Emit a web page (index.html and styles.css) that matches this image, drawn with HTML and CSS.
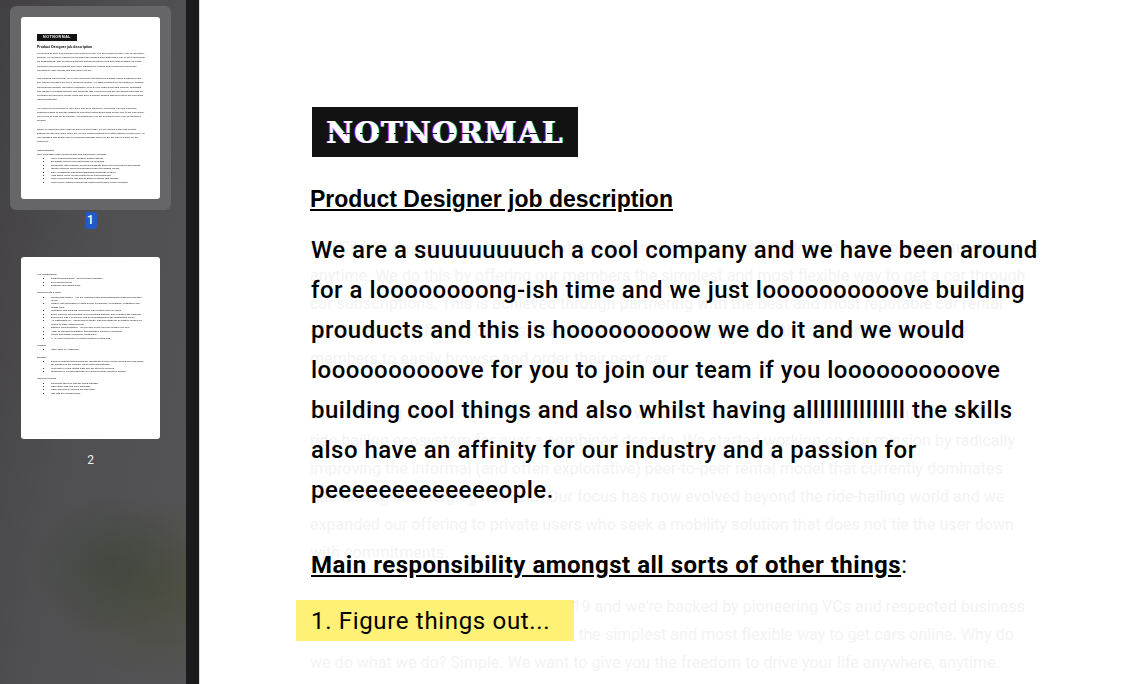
FILE: index.html
```html
<!DOCTYPE html>
<html lang="en">
<head>
  <meta charset="UTF-8">
  <meta name="viewport" content="width=device-width, initial-scale=1.0">
  <title>Product Designer job description</title>
  <link rel="stylesheet" href="styles.css">
</head>
<body>
  <div class="viewer">
    <!-- Page thumbnails -->
    <aside class="sidebar">
      <div class="thumb-wrap selected">
        <div class="thumb">
          <div class="mini-logo">NOTNORMAL</div>
          <div class="mini-title">Product Designer job description</div>
          <p>FlexClub is an auto-tech company who is driven to give you the freedom to drive your life anywhere, anytime. We do this by offering our members the simplest and most flexible way to get a car through car subscriptions. This is achieved through partnering with the best and most reputable car rental companies and fleet providers. Our online marketplace enables both commercial and private members to easily browse and order their next car.</p>
          <p>Our founding team is made up of Uber alums who specialized in building vehicle solutions for the ride-hailing ecosystem for over a combined decade. We started working on our mission by radically improving the informal (and often exploitative) peer-to-peer rental model that currently dominates ride-hailing in emerging markets. Our focus has now evolved beyond the ride-hailing world and we expanded our offering to private users who seek a mobility solution that does not tie the user down with commitments.</p>
          <p>We closed our seed round in early 2019 and we're backed by pioneering VCs and respected business leaders to fund the mission to unlock the simplest and most flexible way to get cars online. Why do we do what we do? Simple. We want to give you the freedom to drive your life anywhere, anytime.</p>
          <p>Ready to rewrite the future with us? Join FlexClub today! We are looking for the first Product Designer to join us in Cape Town. Do you like finding solutions to a better customer experience? Are you obsessed with design and love building products? Then you are the kind of person we are looking for.</p>
          <div class="mini-label">Responsibilities</div>
          <div class="mini-label">Take ownership of the product design and functionality including:</div>
          <ul>
            <li>Solve problems through desktop design patterns</li>
            <li>Be holistic problem solving through real problems</li>
            <li>Collaborate with customer needs and translate these into new features and actions</li>
            <li>Identify areas for improvement that will have the highest impact</li>
            <li>Drive consistently high design standards across the product</li>
            <li>High fidelity mock-up and prototypes to test functionality</li>
            <li>Make involvement in research to gather feedback and insights</li>
            <li>Work closely with the product and engineering team to deliver solutions</li>
          </ul>
        </div>
      </div>
      <span class="page-num current">1</span>

      <div class="thumb-wrap">
        <div class="thumb second">
          <div class="mini-label">Key Relationships</div>
          <ul>
            <li>Product Management - Senior product manager</li>
            <li>Development Team</li>
            <li>Customer Operations team</li>
          </ul>
          <div class="mini-label">Requirements &amp; Skills</div>
          <ul>
            <li>Curious and intuitive - you are obsessed with understanding the customers and their needs</li>
            <li>Mastery and application of visual syntax (typography, iconography, illustration, and design lines)</li>
            <li>Obsessed with products, technology and creating value for users</li>
            <li>Track record of implementing UX/UI solutions that help drive results in the business</li>
            <li>Experience with e-commerce and an understanding of the subscription model</li>
            <li>An outstanding UX - knows how to ideate, test and design for an intuitive product for people to make improvements</li>
            <li>Effective communicators - you are able to get everyone behind your idea</li>
            <li>Ability to interpret quantitative and qualitative sources of feedback</li>
            <li>Mobile app design experience (must have)</li>
            <li>3 - 5 years experience in product design in related field</li>
          </ul>
          <div class="mini-label">Location</div>
          <ul>
            <li>Cape Town or Amsterdam</li>
          </ul>
          <div class="mini-label">Bonuses</div>
          <ul>
            <li>Being an instrument that offers the opportunity to get in on the ground floor and shape the direction of the company as we grow internationally</li>
            <li>Work with a young vibrant team who are driven to succeed</li>
            <li>Ownership in FlexClub through our employee share incentive scheme</li>
          </ul>
          <div class="mini-label">Interview process</div>
          <ul>
            <li>Screening interview with the hiring manager</li>
            <li>Case study task and Folio showcase</li>
            <li>Panel interview to present the case study</li>
            <li>Salt with the founding team</li>
          </ul>
        </div>
      </div>
      <span class="page-num">2</span>
    </aside>

    <div class="divider"></div>

    <!-- Document page -->
    <main class="page">
      <div class="logo"><span class="logo-text">NOTNORMAL</span></div>
      <h1>Product Designer job description</h1>

      <div class="ghost">
        <p>FlexClub is an auto-tech company who is driven to give you the freedom to drive your life anywhere, anytime. We do this by offering our members the simplest and most flexible way to get a car through car subscriptions. This is achieved through partnering with the best and most reputable car rental companies and fleet providers. Our online marketplace enables both commercial and private members to easily browse and order their next car.</p>
        <p>Our founding team is made up of Uber alums who specialized in building vehicle solutions for the ride-hailing ecosystem for over a combined decade. We started working on our mission by radically improving the informal (and often exploitative) peer-to-peer rental model that currently dominates ride-hailing in emerging markets. Our focus has now evolved beyond the ride-hailing world and we expanded our offering to private users who seek a mobility solution that does not tie the user down with commitments.</p>
        <p>We closed our seed round in early 2019 and we're backed by pioneering VCs and respected business leaders to fund the mission to unlock the simplest and most flexible way to get cars online. Why do we do what we do? Simple. We want to give you the freedom to drive your life anywhere, anytime.</p>
      </div>

      <!-- Text pasted over the original copy -->
      <div class="edit">
        <p>We are a suuuuuuuuch a cool company and we have been around for a loooooooong-ish time and we just loooooooooove building prouducts and this is hooooooooow we do it and we would loooooooooove for you to join our team if you loooooooooove building cool things and also whilst having alllllllllllllll the skills also have an affinity for our industry and a passion for peeeeeeeeeeeeeople.</p>
        <p class="edit-head"><u>Main responsibility amongst all sorts of other things</u>:</p>
      </div>
      <div class="highlight">1. Figure things out...</div>
    </main>
  </div>
</body>
</html>
```

FILE: styles.css
```css
* {
  box-sizing: border-box;
}
html, body {
  margin: 0;
  height: 100%;
  overflow: hidden;
}
body {
  font-family: 'Roboto', sans-serif;
  background: #fff;
}
.viewer {
  display: flex;
  height: 684px;
}

/* Sidebar */
.sidebar {
  width: 186px;
  flex: none;
  padding-top: 6px;
  display: flex;
  flex-direction: column;
  align-items: center;
  background:
    radial-gradient(ellipse 80px 70px at 112px 566px, rgba(58,68,58,0.6), rgba(58,68,58,0) 100%),
    radial-gradient(ellipse 110px 90px at 165px 590px, rgba(72,76,50,0.6), rgba(72,76,50,0) 100%),
    linear-gradient(100deg, #413f42 0%, #4f4e50 45%, #545355 100%);
}
.thumb-wrap {
  width: 161px;
  height: 204px;
  padding: 11px;
  border-radius: 6px;
  margin-left: -5px;
}
.thumb-wrap.selected {
  background: #666567;
}
.thumb {
  width: 139px;
  height: 182px;
  padding: 17px 14px 0 16px;
  background: #fff;
  border-radius: 3px;
  color: #000;
  font-family: 'Liberation Sans', sans-serif;
  font-size: 2.45px;
  line-height: 4.2px;
  overflow: hidden;
  filter: blur(0.15px);
}
.thumb.second {
  padding-top: 16px;
}
.thumb p {
  margin: 0 0 4.2px;
}
.thumb ul {
  margin: 0 0 4px;
  padding-left: 14px;
  line-height: 3.4px;
}
.mini-logo {
  width: 40px;
  height: 7px;
  margin-bottom: 3px;
  background: #111;
  color: #fff;
  font-size: 3.6px;
  font-weight: bold;
  line-height: 7px;
  text-align: center;
  letter-spacing: 0.5px;
}
.mini-title {
  font-size: 3.5px;
  font-weight: bold;
  line-height: 7px;
  margin-bottom: 1px;
}
.page-num {
  height: 17px;
  min-width: 12px;
  margin: 2px 0 17px -5px;
  color: #eee;
  font-size: 12px;
  line-height: 17px;
  text-align: center;
}
.page-num.current {
  background: #2259c9;
  color: #fff;
  border-radius: 3px;
  font-weight: 500;
}

/* Strip between sidebar and page */
.divider {
  width: 14px;
  flex: none;
  background: #1c1a1d;
  border-right: 1px solid #dcdcdc;
}

/* Document page */
.page {
  flex: 1;
  position: relative;
  padding: 107px 0 0 110px;
  background: #fff;
}
.logo {
  width: 266px;
  height: 50px;
  margin-left: 2px;
  background: #121212;
  color: #fff;
  text-align: center;
  font-family: 'DejaVu Serif', serif;
  font-size: 29px;
  font-weight: bold;
  line-height: 52px;
  letter-spacing: 1.5px;
  text-shadow: -1px 0 0 #ff3df2, 1px 0 0 #27e8e0;
}
.logo-text {
  position: relative;
  display: inline-block;
}
/* glitch slice through the letters */
.logo-text::after {
  content: "";
  position: absolute;
  left: 0;
  right: 0;
  top: 50%;
  height: 1px;
  background: repeating-linear-gradient(90deg, #121212 0 9px, transparent 9px 17px);
}
h1 {
  margin: 28px 0 0;
  color: #000;
  font-family: 'Liberation Sans', sans-serif;
  font-size: 23px;
  font-weight: bold;
  line-height: 28px;
  text-decoration: underline;
}
.ghost {
  width: 720px;
  margin-top: 21px;
  color: #f3f3f4;
  font-size: 16.1px;
  line-height: 27.8px;
}
.ghost p {
  margin: 0 0 26.6px;
}
.edit {
  position: absolute;
  left: 111px;
  top: 230px;
  width: 735px;
  color: #000;
  font-size: 24px;
  font-weight: 500;
  line-height: 40px;
  letter-spacing: 0.5px;
}
.edit p {
  margin: 0;
}
.edit .edit-head {
  margin-top: 35px;
  font-weight: 400;
}
.edit-head u {
  font-weight: 700;
}
.highlight {
  position: absolute;
  left: 96px;
  top: 600px;
  width: 278px;
  height: 41px;
  padding-left: 15px;
  background: #fff176;
  color: #000;
  font-size: 24px;
  line-height: 42px;
  letter-spacing: 0.67px;
}
```
